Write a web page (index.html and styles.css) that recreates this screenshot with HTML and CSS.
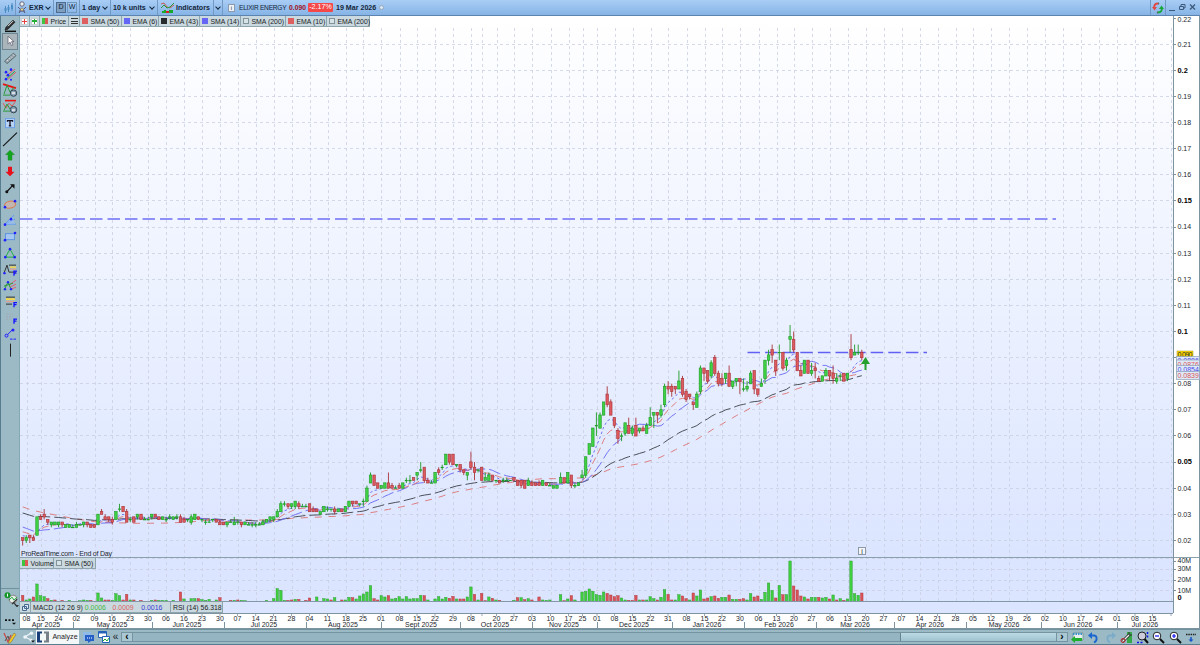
FILE: index.html
```html
<!DOCTYPE html>
<html lang="en">
<head>
    <meta charset="UTF-8">
    <meta name="viewport" content="width=device-width, initial-scale=1.0">
    <title>ELIXIR ENERGY - EXR</title>
    <link rel="stylesheet" href="styles.css">
</head>
<body>
    <div id="app">
        <div class="topbar">
            <div class="cell logo">
                <svg width="12" height="12" viewBox="0 0 12 12"><path d="M2.5 4v7M5.500 3v7M9 1v8" stroke="#4a8cc4" stroke-width="1"/><path d="M2.500 6v3M5.500 5v3M9 3v4" stroke="#4a8cc4" stroke-width="2"/></svg>
            </div>
            <div class="cell symbol">
                <svg width="10" height="13" viewBox="0 0 10 13"><circle cx="5" cy="3" r="2.200" fill="#eef3f8" stroke="#667"/><path d="M1 6l3 3-2 3M9 6l-3 3 2 3M2 10h6" fill="none" stroke="#557"/><circle cx="5" cy="8.500" r="1.500" fill="#e8d48a" stroke="#667" stroke-width=".6"/></svg>
                <b>EXR</b><i class="chev"></i>
            </div>
            <div class="cell dw"><span class="on">D</span><span>W</span></div>
            <div class="cell day"><b>1 day</b><i class="chev"></i></div>
            <div class="cell units"><b>10 k units</b><i class="chev"></i></div>
            <div class="cell ind">
                <svg width="13" height="12" viewBox="0 0 13 12"><path d="M0 2l3-1 3 4 3 1 4-3" fill="none" stroke="#c45a5a"/><path d="M0 6l3-3 3 3 3-1 4-4" fill="none" stroke="#2a9a3a"/><path d="M1 11V9h2V8h2v3z" fill="#1aa82a"/><path d="M5 11V9h3v2z" fill="#d22"/><path d="M8 11V8h4v3z" fill="#1aa82a"/></svg>
                <b>Indicators</b>
            </div>
            <div class="cell more"><i class="chev"></i></div>
            <div class="cell name">
                <span class="info">i</span>
                <span class="title">ELIXIR ENERGY</span>
                <b class="last">0.090</b>
                <span class="change">-2.17%</span>
                <b class="date">19 Mar 2026</b>
                <span class="dot"></span>
            </div>
            <div class="cell sync">
                <svg width="12" height="12" viewBox="0 0 12 12"><path d="M6 1.500C3 1.500 2 3 2 6" fill="none" stroke="#e04848" stroke-width="1.800"/><path d="M0 5h5L2.500 8.500z" fill="#e04848"/><path d="M6 10.500c3 0 4-1.500 4-4.500" fill="none" stroke="#18a838" stroke-width="1.800"/><path d="M7 7h5L9.500 3.500z" fill="#18a838"/><path d="M6 0v3l1.500-1.500zM6 9v3l-1.500-1.500z" fill="#666"/></svg>
            </div>
            <div class="cell win">
                <svg width="28" height="9" viewBox="0 0 28 9"><g fill="none" stroke="#3c5a7c"><path d="M1 7.500h6"/><path d="M11.500 3.500h4v3h-4zM13 3V1.500h4V5h-1"/><path d="M22 1.500l5 5M27 1.500l-5 5" stroke-width="1.300"/></g></svg>
            </div>
        </div>

        <div class="middle">
            <div class="tools">
                <svg viewBox="0 0 16 16"><path d="M4 10l7-7 2 2-7 7-3 1z" fill="#333" stroke="#111" stroke-width=".6"/><path d="M6 9l5-5" stroke="#ddd"/><path d="M3 14.200h11" stroke="#111" stroke-width="1.500"/></svg>
                <svg viewBox="0 0 16 16" class="active"><path d="M6 3v8l2-2 1.500 3.500 1.500-.7L9.500 8.500H12z" fill="#fff" stroke="#667" stroke-width=".8"/></svg>
                <svg viewBox="0 0 16 16"><path d="M2.500 11l9-8 2.500 2.500-9 8z" fill="#98a6ad" stroke="#4b5a62" stroke-width=".8"/><path d="M5 10l1 1M7 8l1 1M9 6.500l1 1M11 4.500l1 1" stroke="#eee"/></svg>
                <svg viewBox="0 0 16 16"><path d="M4 10l9-7M6 13l8-7" stroke="#e05a6a"/><path d="M4 13l9-8" stroke="#2aa84a"/><g fill="#22f"><circle cx="4" cy="6" r="1.300"/><circle cx="9" cy="3.500" r="1.300"/><circle cx="6" cy="9" r="1.300"/><circle cx="4" cy="13" r="1.300"/><circle cx="9" cy="13.500" r="1"/></g></svg>
                <svg viewBox="0 0 16 16"><path d="M1 2l13 4" stroke="#e11" stroke-width="1.600"/><path d="M2 12L5 3l3 7 4-5" fill="none" stroke="#2a9a3a"/><path d="M1 13h7" stroke="#2a9a3a"/><circle cx="11.500" cy="11" r="3.200" fill="#8ba4b2" stroke="#345"/><path d="M10 12v-2h3v2z" fill="#dde"/></svg>
                <svg viewBox="0 0 16 16"><path d="M3 2.500h11" stroke="#e11" stroke-width="1.600"/><path d="M1 5l3 5 3-5 3 3 3-4" fill="none" stroke="#d55"/><path d="M2 12l3-6 3 5" fill="none" stroke="#2a9a3a"/><path d="M1 13h7" stroke="#2a9a3a"/><circle cx="11.500" cy="11.500" r="3.200" fill="#8ba4b2" stroke="#345"/><path d="M10 13v-2h3v2z" fill="#dde"/></svg>
                <svg viewBox="0 0 16 16"><rect x="3.500" y="3.500" width="9" height="9" fill="#b9d4f5" stroke="#6c9fe6"/><path d="M5.500 6.500V5.500h5v1M8 5.500v5M6.800 10.800h2.400" fill="none" stroke="#112" stroke-width="1.300"/></svg>
                <svg viewBox="0 0 16 16"><path d="M1 15L15 1.500" stroke="#111" stroke-width="1.100"/></svg>
                <svg viewBox="0 0 16 16"><path d="M8 3l4.500 4.500H10V13H6V7.500H3.500z" fill="#12a61e" stroke="#2b8030" stroke-width=".4"/></svg>
                <svg viewBox="0 0 16 16"><path d="M8 13l4.500-4.500H10V3.500H6v5H3.500z" fill="#e8101a"/></svg>
                <svg viewBox="0 0 16 16"><path d="M4.500 12L11 5" stroke="#111" stroke-width="1.300"/><path d="M8 4h4.500v4.500z" fill="#111"/><circle cx="4.800" cy="11.500" r="1.500" fill="#111"/></svg>
                <svg viewBox="0 0 16 16"><ellipse cx="8" cy="8.500" rx="5.500" ry="3.500" fill="#c4b5ae" stroke="#d97a4e" transform="rotate(-10 8 8)"/><g fill="#22f"><circle cx="3" cy="11" r="1.300"/><circle cx="13" cy="5" r="1.300"/></g></svg>
                <svg viewBox="0 0 16 16"><path d="M3 12L12 3M3 12l10-5M3 12h11" stroke="#5a96ee"/><path d="M3 12l8-7 2 7z" fill="#9cc2f5" opacity=".6"/><g fill="#22f"><circle cx="3" cy="12.500" r="1.300"/><circle cx="9" cy="7" r="1.300"/></g></svg>
                <svg viewBox="0 0 16 16"><rect x="3.500" y="5.500" width="9" height="6" fill="#a4c6f0" stroke="#5e94e0"/><g fill="#22f"><circle cx="13" cy="4.800" r="1.300"/><circle cx="3" cy="12" r="1.300"/></g></svg>
                <svg viewBox="0 0 16 16"><path d="M8 4L3.500 12h9z" fill="none" stroke="#22b040"/><g fill="#22f"><circle cx="8" cy="4" r="1.300"/><circle cx="3.300" cy="12" r="1.300"/><circle cx="12.700" cy="12" r="1.300"/></g></svg>
                <svg viewBox="0 0 16 16"><path d="M2 12l3-8 2 7 7 0M7 4h7" fill="none" stroke="#333"/><path d="M8 6h6" stroke="#f2d850" stroke-width="1.500"/><path d="M8 8h6" stroke="#e98"/><circle cx="2.500" cy="12" r="1.200" fill="#22f"/><path d="M12 14.500V10h3M12 12h2.500" fill="none" stroke="#11f" stroke-width="1.300"/></svg>
                <svg viewBox="0 0 16 16"><path d="M7 8l7-5M8 10l6-3M9 12l5-2" stroke="#e0607a"/><path d="M2 13l4-8 3 7M2 9l9-3" fill="none" stroke="#2a9a3a"/><g fill="#22f"><circle cx="3" cy="12" r="1.200"/><circle cx="6" cy="5" r="1.200"/><circle cx="9" cy="12" r="1.200"/></g></svg>
                <svg viewBox="0 0 16 16"><path d="M4 4h9M4 11h6" stroke="#333"/><path d="M4 6h9" stroke="#f2d850" stroke-width="2"/><path d="M4 8.500h8" stroke="#e98"/><path d="M12 14V9.500h3M12 11.500h2.500" fill="none" stroke="#11f" stroke-width="1.300"/></svg>
                <svg viewBox="0 0 16 16"><path d="M4 4h7M4 6.500h7M4 9h6" stroke="#a5a8b5" stroke-dasharray="2 1"/><path d="M12 13.500V9h3M12 11h2.500" fill="none" stroke="#11f" stroke-width="1.300"/></svg>
                <svg viewBox="0 0 16 16"><path d="M5 9l6-6" stroke="#22f"/><circle cx="4.500" cy="9.500" r="1.500" fill="#9ac" stroke="#22f"/><circle cx="11" cy="3.800" r="1.500" fill="#22f"/><path d="M8 13h6" stroke="#22f" stroke-dasharray="2.500 1"/></svg>
                <svg viewBox="0 0 16 16"><path d="M8.500 1.500v13" stroke="#222"/></svg>
                <div class="spacer"></div>
                <div class="bottomtool">
                    <svg viewBox="0 0 16 16"><circle cx="10" cy="8" r="4" fill="#e8eee8" stroke="#888"/><path d="M6 9l3-3 2 3 3-3" fill="none" stroke="#2a4"/><circle cx="4.500" cy="4" r="3" fill="#16952a"/><path d="M4.500 2.500v3" stroke="#fff"/><path d="M9 13l5-5M13 14l-3-3" stroke="#333" stroke-width="1.300"/><path d="M12 14h4l-2 2z" fill="#111"/></svg>
                </div>
                <svg viewBox="0 0 16 16"><path d="M3 7h9" stroke="#111" stroke-width="1.800" stroke-dasharray="2 1.500"/><path d="M10 9.500h4l-2 2z" fill="#111"/></svg>
            </div>
            <div class="chart">
                <svg id="plot" width="1180" height="613" viewBox="20 16 1180 613"></svg>
                <div class="legend top">
                    <span class="btn"><i class="plus red"></i></span><span class="btn"><i class="plus green"></i></span>
                    <span style="width:29px"><i class="two"></i>Price</span>
                    <span style="width:11px" class="list"><i></i></span>
                    <span style="width:42px"><i class="r"></i>SMA (50)</span>
                    <span style="width:37px"><i class="b"></i>EMA (6)</span>
                    <span style="width:41px"><i class="k"></i>EMA (43)</span>
                    <span style="width:41px"><i class="b"></i>SMA (14)</span>
                    <span style="width:45px"><i class="n"></i>SMA (200)</span>
                    <span style="width:41px"><i class="r"></i>EMA (10)</span>
                    <span style="width:43px"><i class="n"></i>EMA (200)</span>
                </div>
                <div class="legend vol">
                    <span style="width:34px"><i class="two"></i>Volume</span>
                    <span style="width:42px"><i class="n"></i>SMA (50)</span>
                </div>
                <div class="legend macd">
                    <span style="width:11px" class="rest"><svg width="9" height="9" viewBox="0 0 9 9"><path d="M3.500 1.500h4v4h-4zM1.500 3.500h4v4h-4z" fill="#dceaf5" stroke="#47698f"/></svg></span>
                    <span style="width:140px">MACD (12 26 9)<em class="c1">0.0006</em><em class="c2">0.0009</em><em class="c3">0.0016</em></span>
                    <span style="width:52px">RSI (14) 56.318</span>
                </div>
            </div>
        </div>

        <div class="bottombar">
            <div class="item" style="width:20px"><svg width="14" height="13" viewBox="0 0 14 13"><path d="M1 2l4 9 3-7" fill="none" stroke="#c44" stroke-width="1.200"/><path d="M2 10l3-5 2 6" fill="none" stroke="#555"/><path d="M6 10l5-8 2 1.500-5 8-2.500 1z" fill="#f6c821" stroke="#775" stroke-width=".6"/></svg></div>
            <div class="item" style="width:16px"><svg width="13" height="12" viewBox="0 0 13 12"><path d="M9 2L3 6l6 3" fill="none" stroke="#eef4f7" stroke-width="1.200"/><g fill="#eef4f7"><circle cx="9.500" cy="2.200" r="1.800"/><circle cx="3" cy="6" r="1.800"/><circle cx="9" cy="9" r="1.500"/></g><path d="M9 9.500h4l-2 2z" fill="#111"/></svg></div>
            <div class="item tab"><svg width="12" height="12" viewBox="0 0 12 12"><path d="M0 .5h5v2H3v7h2v2H0z" fill="#173f7a"/><path d="M12 .5H7v2h2v7H7v2h5z" fill="#777f88"/></svg>Analyze</div>
            <div class="item" style="width:17px"><svg width="11" height="11" viewBox="0 0 11 11"><path d="M0 0h8v8H0z" fill="#8fbbe8"/><path d="M2 3h9v6H8l-3 2V9H2z" fill="#2460c8"/><path d="M4 6h6" stroke="#fff" stroke-dasharray="1 1"/></svg></div>
            <div class="item" style="width:13px"><svg width="12" height="12" viewBox="0 0 12 12"><path d="M.5.5h8v6h-8z" fill="#fff" stroke="#2463b8"/><path d="M.5 1.500h8" stroke="#2463b8" stroke-width="2"/><path d="M4.500 5.500h7v6h-7z" fill="#fff" stroke="#2463b8"/><path d="M5 10l2-2 2 2 2-3" fill="none" stroke="#2a3"/></svg></div>
            <div class="item arrows">«</div>
            <div class="scroll">
                <button>‹</button>
                <div class="track"><div class="thumb"></div></div>
                <button>›</button>
            </div>
            <div class="actions">
                <svg viewBox="0 0 13 13"><path d="M2 2h10v7H2z" fill="#e8f0ee" stroke="#799"/><path d="M2 3h10" stroke="#3a8fd0" stroke-width="2" stroke-dasharray="1.500 1"/><path d="M0 8.500L4 5v2h7v3H4v2z" fill="#1fae2e"/></svg>
                <svg viewBox="0 0 13 13"><path d="M3 4.500h4c3 0 4 5 0 7" fill="none" stroke="#1c66cf" stroke-width="1.800"/><path d="M5 1v7L1 4.500z" fill="#1c66cf"/></svg>
                <svg viewBox="0 0 13 13"><path d="M10 4.500H6c-3 0-4 5 0 7" fill="none" stroke="#7aabc8" stroke-width="1.800"/><path d="M8 1v7l4-3.500z" fill="#7aabc8"/></svg>
                <svg viewBox="0 0 13 13"><path d="M7 1h5v11H7z" fill="#35a84a"/><path d="M2.500 10.500l7-7" stroke="#333" stroke-width="3"/><path d="M2.500 10.500l7-7" stroke="#eee" stroke-width="1.300"/><path d="M9 1v3h3" stroke="#333" fill="none"/><circle cx="3" cy="9.500" r="2" fill="none" stroke="#b22"/></svg>
                <svg viewBox="0 0 13 13"><circle cx="6" cy="5" r="4" fill="#ccd" stroke="#222"/><path d="M8.500 8l3.500 4" stroke="#111" stroke-width="2"/><path d="M1 11.500h6M11.500 1v7" stroke="#11e" stroke-width="1.500" stroke-dasharray="2 1.500"/></svg>
                <svg viewBox="0 0 13 13"><circle cx="5" cy="5" r="3.800" fill="#fff" stroke="#222"/><path d="M8 8l4 4" stroke="#111" stroke-width="2"/><path d="M3 5h4" stroke="#11e" stroke-width="1.200"/></svg>
                <svg viewBox="0 0 13 13"><circle cx="5" cy="5" r="3.800" fill="#fff" stroke="#222"/><path d="M8 8l4 4" stroke="#111" stroke-width="2"/><path d="M3 5h4M5 3v4" stroke="#11e" stroke-width="1.200"/></svg>
                <svg viewBox="0 0 13 13"><path d="M1 3.500h10" stroke="#222" stroke-width="1.500" stroke-dasharray="1.500 .8"/><path d="M6 6v3" stroke="#1550c8" stroke-width="1.500"/><path d="M3.500 8.500h5L6 11z" fill="#1550c8"/></svg>
            </div>
        </div>
    </div>
    <script src="chart.js"></script>
</body>
</html>
```
FILE: styles.css
```css
*{
    margin:0;
    padding:0;
    box-sizing:border-box;
}
body{
    width:1200px;
    height:645px;
    overflow:hidden;
    background:#fff;
    font-family:"Liberation Sans", Arial, sans-serif;
    font-size:7.100px;
    color:#1c2227;
}
svg{
    display:block;
    flex:none;
}
#app{
    display:flex;
    flex-direction:column;
    height:645px;
}
/* top bar */
.topbar{
    display:flex;
    height:16px;
    background:linear-gradient(#a9cdf5,#86b4e6);
    border-bottom:1px solid #5d84ae;
    color:#14253a;
}
.cell{
    display:flex;
    align-items:center;
    border-right:1px solid #7299c4;
    white-space:nowrap;
}
.chev{
    width:4px;
    height:4px;
    margin-left:auto;
    margin-right:3px;
    border-right:1px solid #14253a;
    border-bottom:1px solid #14253a;
    transform:translateY(-1px) rotate(45deg);
}
.logo{
    width:16px;
    padding-left:3px;
}
.symbol{
    width:38px;
    padding-left:1px;
}
.symbol b{
    margin-left:2px;
}
.dw{
    width:26px;
    padding-left:2px;
    gap:1px;
}
.dw span{
    width:10px;
    height:11px;
    border:1px solid #7396bd;
    text-align:center;
    line-height:9px;
}
.dw .on{
    background:#7f9fc0;
    border-color:#4d6c90;
}
.day{
    width:31px;
    padding-left:2px;
}
.units{
    width:47px;
    padding-left:2px;
}
.ind{
    width:56px;
    padding-left:3px;
}
.ind b{
    margin-left:2px;
}
.more{
    width:9px;
}
.more .chev{
    margin-right:2px;
}
.name{
    flex:1;
    padding-left:5px;
}
.info{
    width:7px;
    height:8px;
    background:#eef3f8;
    border:1px solid #8b9aac;
    line-height:6px;
    text-align:center;
    font-size:6px;
}
.title{
    width:47px;
    margin-left:4px;
    font-size:6.600px;
    letter-spacing:-.25px;
}
.last{
    width:17px;
    margin-left:3px;
    font-size:6.800px;
    color:#a01226;
}
.change{
    width:25px;
    height:9px;
    margin-left:2px;
    border-radius:1px;
    background:#f54848;
    color:#fff;
    text-align:center;
    line-height:9px;
}
.date{
    width:40px;
    margin-left:3px;
}
.dot{
    width:5px;
    height:5px;
    margin-left:3px;
    border:1px solid #98a8b8;
    border-radius:50%;
    background:#d9e8f8;
}
.sync{
    width:15px;
    padding-left:1px;
}
.win{
    width:34px;
    padding-left:2px;
    border-right:0;
}
/* middle */
.middle{
    display:flex;
    height:613px;
}
.tools{
    display:flex;
    flex-direction:column;
    width:20px;
    padding-left:1px;
    padding-top:1px;
    background:#9bbac6;
    border-left:1px solid #587d8f;
    border-right:1px solid #86a7b4;
}
.tools svg{
    width:16px;
    height:16.250px;
}
.tools .active{
    background:#a9b4bb;
    outline:1px solid #6d8692;
    outline-offset:-1px;
}
.spacer{
    flex:1;
}
.bottomtool{
    height:25px;
    margin-left:-1px;
    padding:2px 0 0 2px;
    border-top:1px solid #6f929f;
}
.chart{
    position:relative;
    width:1180px;
}
#plot text{
    font-size:7px;
    fill:#23272d;
}
#plot .strong{
    font-weight:bold;
    font-size:7.400px;
    fill:#000;
}
.mid{
    text-anchor:middle;
}
.legend{
    position:absolute;
    left:0;
    display:flex;
    height:11px;
    background:#c9d9df;
    border-bottom:1px solid #8fa5ad;
    font-size:6.900px;
}
.legend span{
    display:flex;
    align-items:center;
    padding-left:2px;
    border-right:1px solid #8fa5ad;
    white-space:nowrap;
}
.legend i{
    width:6px;
    height:6px;
    margin-right:2.500px;
    flex:none;
}
.legend .btn{
    width:10px;
    padding-left:1px;
}
.legend .plus{
    width:7px;
    height:7px;
    border:1px solid #c7cfd2;
}
.plus.red{
    background:linear-gradient(#e84040,#e84040) 50% 50%/5px 1px no-repeat, linear-gradient(#e84040,#e84040) 50% 50%/1px 5px no-repeat #fff;
}
.plus.green{
    background:linear-gradient(#23b035,#23b035) 50% 40%/5px 2px no-repeat, linear-gradient(#23b035,#23b035) 50% 50%/1px 5px no-repeat #fff;
}
.two{
    background:linear-gradient(90deg,#3fc53f 50%,#de5757 50%);
}
.r{
    background:#de5f5f;
}
.b{
    background:#6666f5;
}
.k{
    background:#272b2e;
}
.n{
    background:#d8e3e7;
    border:1px solid #83939a;
}
.legend .list i{
    width:7px;
    margin:0;
    background:repeating-linear-gradient(#333 0 1px,transparent 1px 2.500px);
}
.top{
    top:0;
}
.vol{
    top:542px;
    height:11px;
}
.macd{
    top:586px;
    height:11px;
}
.legend .rest{
    padding-left:1px;
}
.legend em{
    width:30px;
    font-style:normal;
}
.legend .c1{
    width:29px;
    margin-left:2px;
    color:#45b845;
}
.c2{
    color:#dd6262;
}
.c3{
    color:#3b3bd8;
}
/* bottom bar */
.bottombar{
    display:flex;
    align-items:center;
    height:16px;
    background:#9bbac6;
    border-top:1px solid #6f929f;
    border-bottom:1px solid #587d8f;
}
.item{
    display:flex;
    align-items:center;
    justify-content:center;
    height:14px;
}
.tab{
    width:43px;
    background:#f4f7f8;
    gap:3px;
    margin-right:1px;
}
.arrows{
    width:11px;
    font-size:10px;
    padding-bottom:2px;
}
.scroll{
    display:flex;
    width:947px;
    height:10px;
    border:1px solid #7594a0;
}
.scroll button{
    width:10px;
    height:8px;
    border:0;
    background:#a9c8d3;
    font-size:10px;
    font-weight:bold;
    line-height:6px;
}
.track{
    flex:1;
    background:#94b5c1;
    border:solid #7594a0;
    border-width:0 1px;
}
.thumb{
    width:156px;
    height:8px;
    margin-left:auto;
    background:linear-gradient(#bcdbe6,#9fc2cf);
    border-left:1px solid #64848f;
}
.actions{
    display:flex;
    gap:3.300px;
    margin-left:3px;
}
.actions svg{
    width:13px;
    height:13px;
}
```
FILE: chart.js
```js
// prices are in thousandths: open,high,low,close
const candles=`21,21,18,20 20,22,19,21 22,22,19,21 21,22,20,20 22,29,22,29 29,30,28,28 30,32,28,29 28,28,26,27 26,27,25,27 26,27,26,27
26,27,25,27 27,27,25,26 25,26,25,26 25,26,25,26 25,26,25,25 25,27,25,26 26,26,26,26 26,27,25,27 27,27,25,26 26,26,25,25
26,26,25,25 26,30,26,30 31,32,30,30 29,30,28,28 29,29,27,28 28,29,26,27 28,31,28,31 32,34,31,32 33,33,31,31 31,32,27,27
28,29,27,28 29,29,27,27 29,30,28,30 30,30,28,28 28,29,28,28 28,29,28,28 29,30,28,30 30,30,29,29 29,29,28,28 28,29,28,29
28,29,27,28 29,30,28,29 28,29,28,29 29,30,28,29 29,30,27,27 28,29,27,27 28,28,27,28 27,30,26,29 28,30,28,30 29,29,28,28
28,28,27,28 27,28,26,27 27,28,27,27 28,28,27,28 28,28,27,27 27,28,26,26 27,27,26,26 26,27,25,27 27,28,27,27 26,29,26,27
27,28,26,27 27,27,25,26 26,27,26,27 26,27,26,26 26,27,25,26 26,27,25,26 26,27,26,26 26,28,26,27 27,28,27,28 28,29,27,29
28,29,27,29 29,32,29,31 31,35,31,34 34,35,33,34 34,34,32,33 33,34,32,34 33,35,32,35 34,35,32,33 33,34,33,33 33,34,33,33
34,34,31,31 32,33,31,31 32,32,31,31 30,31,30,31 31,33,31,33 32,33,31,32 32,32,31,32 32,33,30,31 31,32,31,32 32,32,31,31
31,33,31,33 33,35,33,35 35,35,33,34 35,35,34,34 34,34,33,34 35,36,33,35 35,41,35,40 42,46,42,45 45,45,41,41 42,42,40,40
40,41,40,41 40,42,40,42 42,46,40,40 41,42,40,40 40,41,40,40 41,42,40,40 40,42,40,42 43,44,42,43 43,45,42,43 44,44,43,43
45,46,43,46 47,50,46,47 48,48,42,43 43,44,42,42 42,43,42,42 42,46,42,46 47,48,45,46 48,49,47,48 49,53,49,53 53,53,49,50
53,53,49,49 49,49,48,49 49,49,46,47 47,47,45,46 45,46,43,46 50,54,47,48 48,50,43,46 47,47,46,47 48,48,43,43 43,46,43,44
43,46,43,45 45,45,43,43 43,43,42,43 43,43,42,42 43,44,42,43 43,44,43,43 43,43,43,43 44,44,43,43 43,43,41,41 43,43,40,41
43,43,40,40 41,44,41,43 42,43,41,41 42,42,41,41 42,43,41,41 41,43,41,43 42,42,41,41 41,42,41,41 40,41,40,41 40,41,40,41
42,46,42,44 44,44,42,42 42,46,42,46 45,45,40,41 41,42,40,41 41,42,41,42 44,47,44,45 45,52,44,52 53,57,53,57 56,63,56,63
64,69,60,64 63,69,63,68 68,73,68,73 76,79,71,72 73,74,68,68 67,67,63,64 62,63,57,59 60,61,58,60 61,65,60,65 64,67,61,61
61,64,60,63 64,67,60,60 62,63,61,63 63,64,62,62 61,65,61,64 64,71,64,67 68,69,63,69 69,69,65,68 68,72,67,70 72,80,71,79
79,81,76,78 79,80,75,77 79,79,76,78 78,85,78,81 82,83,75,76 77,78,73,74 76,76,74,75 73,73,70,72 71,77,71,76 77,87,76,86
86,86,81,84 85,85,80,81 83,89,82,88 90,91,83,84 84,85,79,80 82,84,79,80 82,84,80,84 84,87,79,79 79,81,78,81 81,82,79,82
82,82,76,81 78,82,77,78 78,81,77,79 80,85,80,84 85,85,76,78 78,78,75,76 79,82,79,80 82,89,80,89 89,93,87,91 93,95,88,91
89,89,83,85 92,95,89,92 92,92,85,86 87,90,85,89 97,102.500,92,98 97,100,92,93 92,92,85,85 85,87,83,83 84,89,84,89 89,89,84,84
84,88,83,85 86,88,82,85 82,83,81,81 81,83,81,83 83,86,83,85 85,85,81,83 84,87,80,82 81,84,80,82 83,84,81,83 84,84,81,81
82,84,81,84 93,99,89,90 91,95,91,92 92,95,91,92 92,93,89,90`.split(/\s+/).map(c=>c.split(",").map(Number));

// bar heights in thirds of a pixel, negative when the day closed down
const volumes=`-18 4 7 -13 52 17 14 -8 3 -4 0 -3 0 3 0 0 2 4 3 -3 0 25 10 -4 -4 3 23 17 -4 -21 4 -4 0 -3 0 0 3 -4 3 3
3 0 3 0 -28 7 0 8 8 -8 5 3 6 0 4 -11 0 0 -3 3 -4 3 2 0 0 0 0 0 3 0 8 38 33 3 -3 -4 6 -6 0 -3
-10 0 13 0 8 7 -4 11 0 -4 4 12 -11 7 16 22 28 47 -8 -4 17 13 -17 7 9 14 7 14 7 8 8 18 -17 4 0 7 14 7 12 -9
-15 7 -7 -7 13 43 -21 4 -24 -2 13 -9 4 -3 0 0 0 3 -11 11 -5 8 -4 0 -13 4 3 4 0 0 20 -2 7 -17 4 0 28 30 37 30
20 18 28 -24 -19 -14 -17 10 4 -3 -3 -18 4 -4 4 14 8 -4 12 35 -21 -4 4 20 -16 -8 4 -25 16 34 -7 -10 14 -16 -9 12 12 -19 6 6
-6 -8 4 23 -13 -16 6 27 55 33 -10 48 -20 20 121 -46 -34 -16 13 -7 12 12 -12 10 12 -7 19 -4 8 -3 7 121 23 18 -25`.split(/\s+/).map(Number);

const days=`26.500:08 41:15 58.500:24 76.300:02 94.500:09 112:16 130:23 148:30 166:06 184:16 202:23 220:30 237.500:07 255.700:14 273.500:21 291.500:28 309.500:04 327.500:11 346:18 363:25 381:01 399.500:08 417:15 435:22 453:29 471:08 482: 496.500:20 514:27 532:03 550.500:10 568.500:17 582.500:25 597:01 614.500:08 632.500:15 650.500:22 668:31 686.500:08 704.500:15 722:22 740:30 758.500:06 776.500:13 794:20 811.500:27 830:06 847.500:13 865.500:20 883.500:27 901.500:07 919.500:14 937.500:21 955.500:28 973:05 991:12 1009:19 1027:26 1045:02 1063:10 1081:17 1099:24 1117:01 1135:08 1152.500:15 1171:`.split(" ").map(d=>d.split(":"));
const months=[["Apr 2025",46,73],["May 2025",112,152],["Jun 2025",187,224],["Jul 2025",264,306],["Aug 2025",343,381],["Sept 2025",421,460],["Oct 2025",495,532],["Nov 2025",564,597],["Dec 2025",634,672],["Jan 2026",707,744],["Feb 2026",779,816],["Mar 2026",855,894],["Apr 2026",930,966],["May 2026",1004,1041],["Jun 2026",1078,1117],["Jul 2026",1145,0]];

const px=i=>22.670+3.586*i;
const py=p=>592.600-2.611*p;
let out="";

function line(x1,y1,x2,y2,stroke,extra=""){
    out+=`<line x1="${x1}" y1="${y1}" x2="${x2}" y2="${y2}" stroke="${stroke}" ${extra}/>`;
}
function rect(x,y,w,h,fill,extra=""){
    out+=`<rect x="${x}" y="${y}" width="${w}" height="${h}" fill="${fill}" ${extra}/>`;
}
function text(x,y,s,extra=""){
    out+=`<text x="${x}" y="${y}" ${extra}>${s}</text>`;
}

// backgrounds
out+=`<defs><linearGradient id="sky" x1="0" y1="0" x2="0" y2="1"><stop offset="0" stop-color="#ffffff"/><stop offset="1" stop-color="#dbe5ff"/></linearGradient></defs>`;
rect(20,16,1153,541,"url(#sky)");
rect(20,557,1153,56,"#dbe5ff");

// grid
const dash='stroke-dasharray="3 3" stroke-opacity=".75"';
days.forEach(d=>{
    let x=Math.round(d[0])+.5;
    line(x,28,x,601,"#c8cee0",dash);
});
for(let p=20;p<220;p+=10){
    let y=Math.floor(py(p))+.5;
    line(20,y,1173,y,"#c8cee0",dash);
}
[558.500,569.500,580.500,590.500].forEach(y=>line(20,y,1173,y,"#c8cee0",dash));

// levels
line(20,219,1056,219,"#6f6ff5",'stroke-width="1.400" stroke-dasharray="12.500 5"');
line(747.500,352.500,927,352.500,"#6060f2",'stroke-width="1.400" stroke-dasharray="12.500 5.100"');

// moving averages
const closes=candles.map(c=>c[3]);
const past=[];
for(let i=0;i<36;i++) past.push(45-i*.5);
for(let i=0;i<14;i++) past.push(29-i*.5);
const all=past.concat(closes);
function ema(n,seed){
    let v=seed;
    return closes.map(c=>v=v+(c-v)*2/(n+1));
}
function sma(n){
    return closes.map((c,i)=>{
        let part=all.slice(i+51-n,i+51);
        return part.reduce((a,b)=>a+b,0)/n;
    });
}
function curve(values,stroke,dashes){
    let pts=values.map((v,i)=>px(i).toFixed(1)+","+py(v).toFixed(1)).join(" ");
    out+=`<polyline points="${pts}" fill="none" stroke="${stroke}" stroke-width=".9" stroke-dasharray="${dashes}"/>`;
}
curve(sma(50),"#dd7272","7 7");
curve(ema(43,31),"#3a3d45","12 4");
curve(sma(14),"#6868ee","12 4");
curve(ema(10,24),"#dd7272","7 4");
curve(ema(6,22.500),"#6868ee","2.500 2.500");

// candles
candles.forEach((c,i)=>{
    let [o,h,l,cl]=c;
    let x=px(i);
    let up=cl>=o;
    let edge=up?"#1d9a25":"#a83238";
    line(x,py(h),x,py(l),edge,'stroke-width=".9"');
    rect(x-1.250,py(Math.max(o,cl))-.1,2.500,Math.max(.6,Math.abs(o-cl)*2.611+.2),up?"#40d244":"#dd5a5e",`stroke="${edge}" stroke-width=".6"`);
});
out+=`<path d="M865.500 357l4.500 7h-3.500v6h-2v-6H861z" fill="#25a02c"/>`;

// volume
volumes.forEach((v,i)=>{
    if(v==0) return;
    let h=Math.abs(v)/3;
    rect(px(i)-1.250,601.300-h,2.500,h,v>0?"#3fce3f":"#d95257",`stroke="${v>0?"#25972c":"#a8383c"}" stroke-width=".4"`);
});

// panel borders
line(20,557.500,1200,557.500,"#8aa0ab");
line(20,601.500,1173,601.500,"#8499a8");
line(20,613.500,1173,613.500,"#7d939f");
line(1173.500,16,1173.500,613,"#7d939f");
line(1199.500,16,1199.500,629,"#7d939f");
line(20,628.500,1200,628.500,"#7d939f");
text(21,555.500,"ProRealTime.com - End of Day",'textLength="91"');
rect(858.500,547.500,7,7,"#f3f6fa",'stroke="#8d99a5"');
text(862,553.700,"i",'class="mid"');

// price axis
for(let p=20;p<=220;p+=10){
    if(p==90) continue;
    let y=py(p);
    line(1173,Math.floor(y)+.5,1176,Math.floor(y)+.5,"#7d939f");
    text(1177.500,p==220?22:y+2.400,p/1000,p%50==0?'class="strong"':"");
}
line(1173,357.500,1176,357.500,"#7d939f");
rect(1177,351,16,7,"#ffd800",'stroke="#ab9420" stroke-width=".5"');
text(1177.500,357.300,"0.090",'textLength="15"');
[["0.0886",357,"#4a4ae8"],["0.0876",360.500,"#d85a5a"],["0.0854",366,"#4a4ae8"],["0.0839",372,"#d85a5a"]].forEach(t=>{
    rect(1176.500,t[1]-.5,23,8,"#dfe8f7",'stroke="#8fa3b8" stroke-width=".7"');
    text(1177.500,t[1]+6,t[0],`style="fill:${t[2]}"`);
});
[["40M",563],["30M",571.200],["20M",582.300],["10M",592.800]].forEach(t=>{
    text(1177.500,t[1],t[0]);
    line(1173,Math.floor(t[1]-2)+.5,1176,Math.floor(t[1]-2)+.5,"#7d939f");
});
text(1177.500,599.800,"0",'class="strong"');

// date axis
days.forEach(d=>{
    line(d[0],613,d[0],616,"#7d939f",'stroke-width=".8"');
    text(d[0],620.800,d[1],'class="mid"');
});
months.forEach(m=>{
    text(m[1],627,m[0],'class="mid"');
    if(m[2]) line(m[2]+.5,622,m[2]+.5,628,"#7d939f");
});

document.getElementById("plot").innerHTML=out;
```
